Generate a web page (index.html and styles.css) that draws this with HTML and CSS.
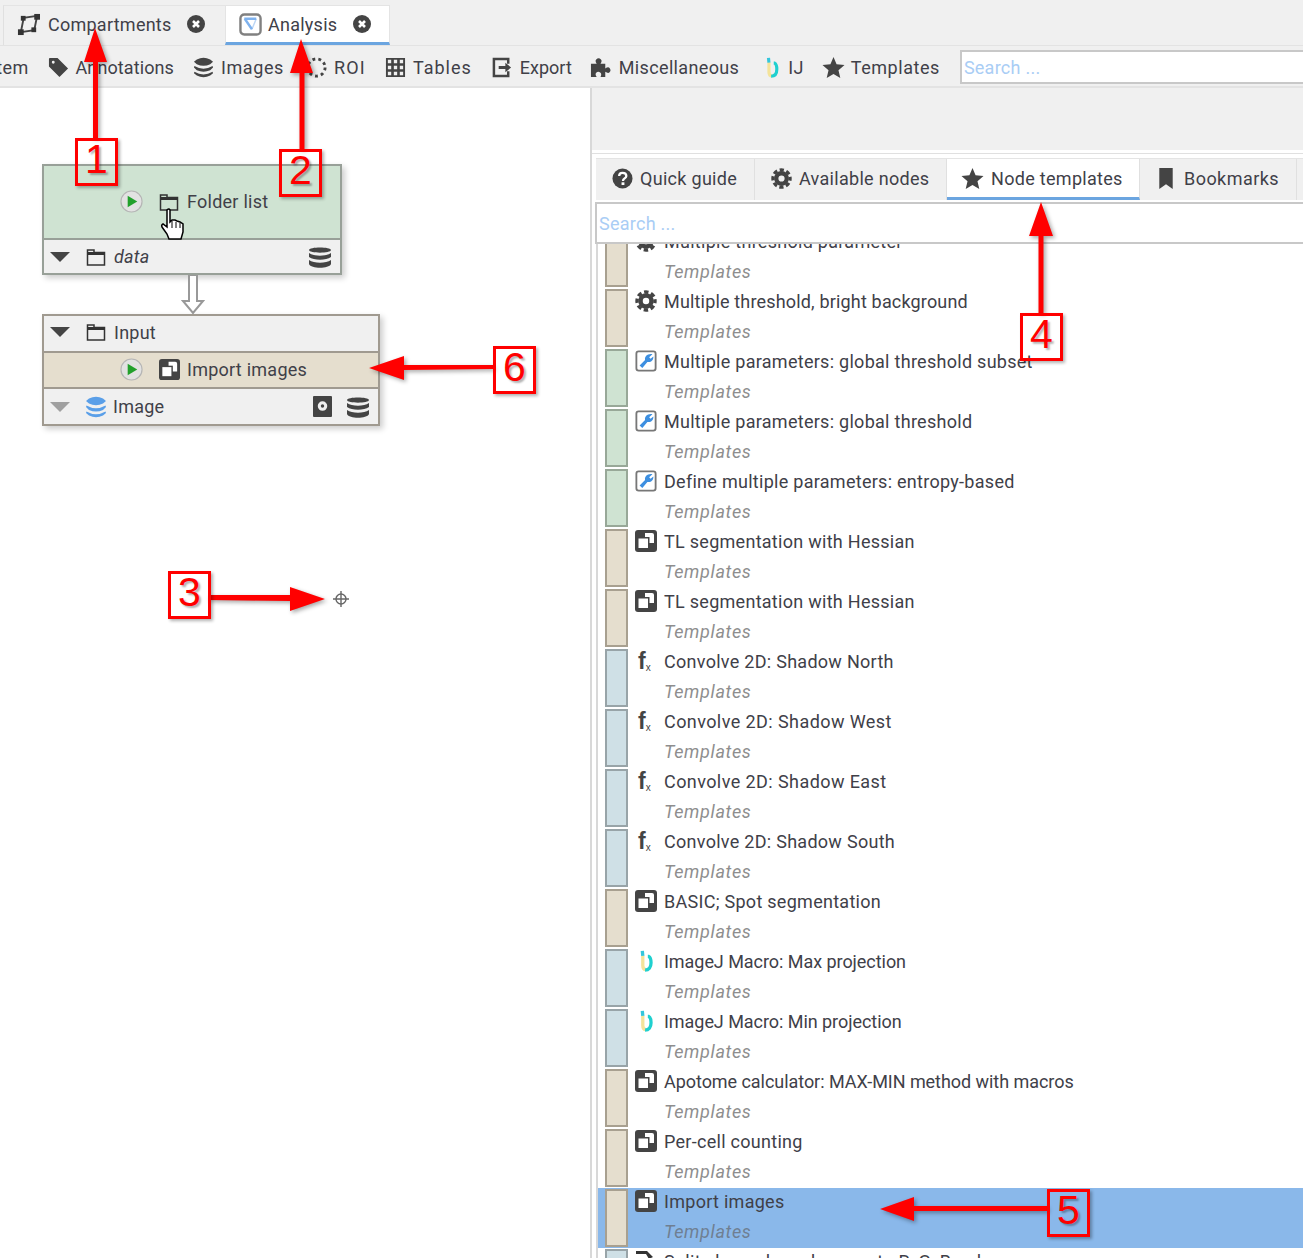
FILE: index.html
```html
<!DOCTYPE html>
<html lang="en">
<head>
    <meta charset="UTF-8">
    <meta name="viewport" content="width=device-width, initial-scale=1.0">
    <title>Analysis</title>
    <link rel="stylesheet" href="styles.css">
</head>
<body>
    <svg class="sprite" width="0" height="0">
        <symbol id="i-compartments" viewBox="0 0 24 24">
            <path d="M4 20 7 5 21 3 18 18Z" fill="none" stroke="#444" stroke-width="2"/>
            <rect x="1" y="17" width="6" height="6" fill="#333"/><rect x="4" y="3" width="5" height="5" fill="#333"/>
            <rect x="18" y="1" width="6" height="6" fill="#333"/><rect x="15" y="15" width="5" height="5" fill="#333"/>
        </symbol>
        <symbol id="i-analysis" viewBox="0 0 24 24">
            <rect x="1.500" y="1.500" width="21" height="21" rx="4" fill="#fff" stroke="#808080" stroke-width="2.500"/>
            <path d="M18 6 13.500 17" fill="none" stroke="#bcd6f5" stroke-width="1.500"/>
            <path d="M5.500 6H18M6 6 13.500 17" fill="none" stroke="#7fb2ee" stroke-width="2.500"/>
        </symbol>
        <symbol id="i-close" viewBox="0 0 18 18">
            <circle cx="9" cy="9" r="9" fill="#444"/>
            <path d="M6 6 12 12M12 6 6 12" stroke="#fff" stroke-width="2.600"/>
        </symbol>
        <symbol id="i-tag" viewBox="0 0 22 22">
            <path d="M1 2Q1 1 2 1H10L21 12 12 21 1 10ZM5.500 4A1.500 1.500 0 1 0 5.510 7 1.500 1.500 0 0 0 5.500 4Z" fill="#444" fill-rule="evenodd"/>
        </symbol>
        <symbol id="i-layers" viewBox="0 0 22 22">
            <path d="M4 2.500Q11 -1 18 2.500L21 5 18 7.500Q11 11 4 7.500L1 5ZM1.500 9.500Q11 15 20.500 9.500L21 11 18 14Q11 17 4 14L1 11ZM1.500 15.500Q11 21 20.500 15.500L21 17 18 19.500Q11 23 4 19.500L1 17Z" fill="currentColor"/>
        </symbol>
        <symbol id="i-roi" viewBox="0 0 22 22">
            <circle cx="11" cy="11" r="9" fill="none" stroke="#444" stroke-width="3" stroke-dasharray="3 3.300"/>
        </symbol>
        <symbol id="i-table" viewBox="0 0 22 22">
            <path d="M1 1H21V21H1ZM3 3h3.500v3.500H3ZM9.250 3h3.500v3.500h-3.500ZM15.500 3H19v3.500h-3.500ZM3 9.250h3.500v3.500H3ZM9.250 9.250h3.500v3.500h-3.500ZM15.500 9.250H19v3.500h-3.500ZM3 15.500h3.500V19H3ZM9.250 15.500h3.500V19h-3.500ZM15.500 15.500H19V19h-3.500Z" fill="#444" fill-rule="evenodd"/>
        </symbol>
        <symbol id="i-export" viewBox="0 0 22 22">
            <path d="M17 7V2H2V20H17V15" fill="none" stroke="#444" stroke-width="2.600"/>
            <path d="M7 9.500H14V6L20 11 14 16V12.500H7Z" fill="#444"/>
        </symbol>
        <symbol id="i-puzzle" viewBox="0 0 22 22">
            <path d="M1 7H7Q5 4 6.500 2.500 9 0 11.500 2.500 13 4 11 7H16V12Q19 10 20.500 11.500 22.500 14 20.500 16 19 17.500 16 15.500V21H11Q12.500 18 11 16.500 8.500 14.500 6.500 16.500 5 18 7 21H1Z" fill="#444"/>
        </symbol>
        <symbol id="i-ij" viewBox="0 0 16 24">
            <path d="M4.500 6V17C4.500 20 6 21.500 8 21.500" fill="none" stroke="#f4e39a" stroke-width="3.600"/>
            <path d="M4 1 4.500 6.500" fill="none" stroke="#35c6dc" stroke-width="3.600"/>
            <path d="M10 7H11C13 8 13.500 10 13.500 14 13.500 19 11 22 7 22" fill="none" stroke="#1fd0cf" stroke-width="3.600"/>
        </symbol>
        <symbol id="i-star" viewBox="0 0 24 24">
            <path d="M12 1 15.200 8.700 23.500 9.400 17.200 14.800 19.100 23 12 18.700 4.900 23 6.800 14.800 .5 9.400 8.800 8.700Z" fill="#444"/>
        </symbol>
        <symbol id="i-help" viewBox="0 0 22 22">
            <circle cx="11" cy="11" r="10.500" fill="#444"/>
            <path d="M7.500 8.500C7.500 6 9 5 11 5 13.500 5 15 6.300 15 8.300 15 11 11.500 10.800 11.500 13.500" fill="none" stroke="#fff" stroke-width="2.400"/>
            <rect x="10" y="15" width="3" height="2.800" fill="#fff"/>
        </symbol>
        <symbol id="i-cog" viewBox="0 0 22 22">
            <circle cx="11" cy="11" r="9" fill="none" stroke="#444" stroke-width="3.400" stroke-dasharray="4.400 2.670" stroke-dashoffset="2.200"/>
            <circle cx="11" cy="11" r="5.500" fill="none" stroke="#444" stroke-width="4.500"/>
        </symbol>
        <symbol id="i-bookmark" viewBox="0 0 16 24">
            <path d="M1 1H15V23L8 18 1 23Z" fill="#444"/>
        </symbol>
        <symbol id="i-folder" viewBox="0 0 20 20">
            <path d="M1.500 3H8V5.500H18.500V18H1.500Z" fill="none" stroke="#333" stroke-width="1.500"/>
            <rect x="1" y="5" width="18" height="3" fill="#333"/>
        </symbol>
        <symbol id="i-import" viewBox="0 0 22 22">
            <rect x="0" y="0" width="22" height="22" rx="3" fill="#444"/>
            <path d="M10 3H17Q19 3 19 5V13H10Z" fill="#fff"/>
            <rect x="2" y="7" width="12.500" height="12.500" fill="#444"/>
            <rect x="3.500" y="8.500" width="9.500" height="9.500" fill="#fff"/>
        </symbol>
        <symbol id="i-wrench" viewBox="0 0 24 24">
            <rect x="1.500" y="1.500" width="21" height="21" rx="2.500" fill="#fff" stroke="#777" stroke-width="2"/>
            <path d="M19 4.500 15.500 8 17 9.500 20 7C20.500 11 17 14 13.500 13L8 19.500 5 17 11 11C10 7 14 3.500 19 4.500Z" fill="#3d8fe0"/>
        </symbol>
        <symbol id="i-split" viewBox="0 0 22 22">
            <path d="M1 1H12L18 7 14 9 11 4H1Z" fill="#333"/>
        </symbol>
        <symbol id="i-play" viewBox="0 0 24 24">
            <circle cx="12" cy="12" r="11" fill="#e2e2e2" stroke="#b5b5b5" stroke-width="1.200"/>
            <path d="M8 6 18 12 8 18Z" fill="#22a02c"/>
        </symbol>
        <symbol id="i-db" viewBox="0 0 22 24">
            <path d="M0 5C0 1.500 22 1.500 22 5S0 8.500 0 5ZM0 8C5 11.500 17 11.500 22 8V12C17 15.500 5 15.500 0 12ZM0 15C5 18.500 17 18.500 22 15V19C20 24 2 24 0 19Z" fill="#444"/>
        </symbol>
        <symbol id="i-disk" viewBox="0 0 20 22">
            <path d="M1 0H19Q20 0 20 1V21Q20 22 19 22H1Q0 22 0 21V1Q0 0 1 0ZM10 5.500A5 5 0 1 0 10.010 15.500 5 5 0 0 0 10 5.500Z" fill="#444" fill-rule="evenodd"/>
            <circle cx="10" cy="10.500" r="1.800" fill="#444"/>
        </symbol>
    </svg>

    <div class="app">
        <div class="tabbar">
            <div class="doc-tab">
                <svg class="ico-24"><use href="#i-compartments"/></svg>
                <span>Compartments</span>
                <svg class="ico-close"><use href="#i-close"/></svg>
            </div>
            <div class="doc-tab doc-tab-active">
                <svg class="ico-24"><use href="#i-analysis"/></svg>
                <span>Analysis</span>
                <svg class="ico-close"><use href="#i-close"/></svg>
            </div>
        </div>

        <div class="toolbar">
            <span class="tool tool-clipped">Item</span>
            <span class="tool tool-annotations"><svg class="ico-22"><use href="#i-tag"/></svg>Annotations</span>
            <span class="tool tool-images"><svg class="ico-22"><use href="#i-layers"/></svg>Images</span>
            <span class="tool tool-roi"><svg class="ico-22"><use href="#i-roi"/></svg>ROI</span>
            <span class="tool tool-tables"><svg class="ico-22"><use href="#i-table"/></svg>Tables</span>
            <span class="tool tool-export"><svg class="ico-22"><use href="#i-export"/></svg>Export</span>
            <span class="tool tool-misc"><svg class="ico-22"><use href="#i-puzzle"/></svg>Miscellaneous</span>
            <span class="tool tool-ij"><svg class="ico-ij"><use href="#i-ij"/></svg>IJ</span>
            <span class="tool tool-templates"><svg class="ico-24"><use href="#i-star"/></svg>Templates</span>
            <input class="search search-top" type="text" placeholder="Search ...">
        </div>

        <div class="main">
            <div class="canvas">
                <div class="node node-folder">
                    <div class="node-body node-body-green">
                        <svg class="ico-24"><use href="#i-play"/></svg>
                        <svg class="ico-20"><use href="#i-folder"/></svg>
                        <span>Folder list</span>
                    </div>
                    <div class="slot">
                        <span class="tri"></span>
                        <svg class="ico-20"><use href="#i-folder"/></svg>
                        <em>data</em>
                        <svg class="ico-db"><use href="#i-db"/></svg>
                    </div>
                </div>

                <svg class="connector" width="24" height="40" viewBox="0 0 24 40">
                    <path d="M8 0V26H2L12 38 22 26H16V0Z" fill="#fff" stroke="#999" stroke-width="2"/>
                </svg>

                <div class="node node-import">
                    <div class="slot slot-input">
                        <span class="tri"></span>
                        <svg class="ico-20"><use href="#i-folder"/></svg>
                        <span>Input</span>
                    </div>
                    <div class="node-body node-body-beige">
                        <svg class="ico-24"><use href="#i-play"/></svg>
                        <svg class="ico-22"><use href="#i-import"/></svg>
                        <span>Import images</span>
                    </div>
                    <div class="slot">
                        <span class="tri tri-light"></span>
                        <svg class="ico-layers"><use href="#i-layers"/></svg>
                        <span>Image</span>
                        <svg class="ico-disk"><use href="#i-disk"/></svg>
                        <svg class="ico-db ico-db-tight"><use href="#i-db"/></svg>
                    </div>
                </div>

                <svg class="crosshair" width="16" height="16" viewBox="0 0 16 16">
                    <circle cx="8" cy="8" r="5" fill="none" stroke="#666" stroke-width="1.400"/>
                    <path d="M8 0V16M0 8H16" stroke="#666" stroke-width="1.400"/>
                </svg>

                <svg class="hand" width="26" height="34" viewBox="0 0 26 34">
                    <path d="M7 2Q9 0 10 2V14L12 12 15 12 17 13 20 14 23 16V24L21 31H9L7 26 2 19Q1 17 3 16L7 19Z" fill="#fff" stroke="#000" stroke-width="1.500"/>
                    <path d="M12 13V20M16 14V20M20 15V20" stroke="#000"/>
                </svg>
            </div>

            <div class="side">
                <div class="side-head"></div>
                <div class="side-tabs">
                    <div class="side-tab"><svg class="ico-22"><use href="#i-help"/></svg>Quick guide</div>
                    <div class="side-tab"><svg class="ico-22"><use href="#i-cog"/></svg>Available nodes</div>
                    <div class="side-tab side-tab-active"><svg class="ico-24"><use href="#i-star"/></svg>Node templates</div>
                    <div class="side-tab"><svg class="ico-bookmark"><use href="#i-bookmark"/></svg>Bookmarks</div>
                </div>
                <input class="search search-side" type="text" placeholder="Search ...">

                <div class="list">
                    <div class="row row-first row-beige"><span class="swatch"></span><div class="row-title"><svg class="row-ico"><use href="#i-cog"/></svg>Multiple threshold parameter</div><div class="row-sub">Templates</div></div>
                    <div class="row row-beige"><span class="swatch"></span><div class="row-title row-title-mid"><svg class="row-ico"><use href="#i-cog"/></svg>Multiple threshold, bright background</div><div class="row-sub">Templates</div></div>
                    <div class="row row-green"><span class="swatch"></span><div class="row-title"><svg class="row-ico"><use href="#i-wrench"/></svg>Multiple parameters: global threshold subset</div><div class="row-sub">Templates</div></div>
                    <div class="row row-green"><span class="swatch"></span><div class="row-title"><svg class="row-ico"><use href="#i-wrench"/></svg>Multiple parameters: global threshold</div><div class="row-sub">Templates</div></div>
                    <div class="row row-green"><span class="swatch"></span><div class="row-title"><svg class="row-ico"><use href="#i-wrench"/></svg>Define multiple parameters: entropy-based</div><div class="row-sub">Templates</div></div>
                    <div class="row row-beige"><span class="swatch"></span><div class="row-title"><svg class="row-ico"><use href="#i-import"/></svg>TL segmentation with Hessian</div><div class="row-sub">Templates</div></div>
                    <div class="row row-beige"><span class="swatch"></span><div class="row-title"><svg class="row-ico"><use href="#i-import"/></svg>TL segmentation with Hessian</div><div class="row-sub">Templates</div></div>
                    <div class="row row-blue"><span class="swatch"></span><div class="row-title"><span class="fx">f<small>x</small></span>Convolve 2D: Shadow North</div><div class="row-sub">Templates</div></div>
                    <div class="row row-blue"><span class="swatch"></span><div class="row-title row-title-wide"><span class="fx">f<small>x</small></span>Convolve 2D: Shadow West</div><div class="row-sub">Templates</div></div>
                    <div class="row row-blue"><span class="swatch"></span><div class="row-title row-title-wide"><span class="fx">f<small>x</small></span>Convolve 2D: Shadow East</div><div class="row-sub">Templates</div></div>
                    <div class="row row-blue"><span class="swatch"></span><div class="row-title"><span class="fx">f<small>x</small></span>Convolve 2D: Shadow South</div><div class="row-sub">Templates</div></div>
                    <div class="row row-beige"><span class="swatch"></span><div class="row-title"><svg class="row-ico"><use href="#i-import"/></svg>BASIC; Spot segmentation</div><div class="row-sub">Templates</div></div>
                    <div class="row row-blue"><span class="swatch"></span><div class="row-title row-title-tight"><svg class="row-ico"><use href="#i-ij"/></svg>ImageJ Macro: Max projection</div><div class="row-sub">Templates</div></div>
                    <div class="row row-blue"><span class="swatch"></span><div class="row-title row-title-tight"><svg class="row-ico"><use href="#i-ij"/></svg>ImageJ Macro: Min projection</div><div class="row-sub">Templates</div></div>
                    <div class="row row-beige"><span class="swatch"></span><div class="row-title row-title-tight"><svg class="row-ico"><use href="#i-import"/></svg>Apotome calculator: MAX-MIN method with macros</div><div class="row-sub">Templates</div></div>
                    <div class="row row-beige"><span class="swatch"></span><div class="row-title"><svg class="row-ico"><use href="#i-import"/></svg>Per-cell counting</div><div class="row-sub">Templates</div></div>
                    <div class="row row-beige row-selected"><span class="swatch"></span><div class="row-title"><svg class="row-ico"><use href="#i-import"/></svg>Import images</div><div class="row-sub">Templates</div></div>
                    <div class="row row-blue"><span class="swatch"></span><div class="row-title"><svg class="row-ico"><use href="#i-split"/></svg>Split channels and merge to R, G, B only</div><div class="row-sub">Templates</div></div>
                </div>
            </div>
        </div>
    </div>

    <!-- red annotations drawn on top of the screenshot -->
    <svg class="arrows" width="1303" height="1258" viewBox="0 0 1303 1258">
        <path d="M93 138V62H84L95 28 107 62H98V138Z"/>
        <path d="M299.500 149V73H290L301 39 313 73H304.500V149Z"/>
        <path d="M208 595H290V587L325 599 290 611V601L208 600Z"/>
        <path d="M1038.500 313V236H1029L1041 202 1053 236H1043.500V313Z"/>
        <path d="M1047 1206H914V1197L880 1209 914 1221V1211H1047Z"/>
        <path d="M493 365H404V356L369 368 404 380V370L493 369Z"/>
    </svg>
    <div class="mark mark-1">1</div>
    <div class="mark mark-2">2</div>
    <div class="mark mark-3">3</div>
    <div class="mark mark-4">4</div>
    <div class="mark mark-5">5</div>
    <div class="mark mark-6">6</div>
</body>
</html>
```

FILE: styles.css
```css
html, body {
    margin: 0;
    padding: 0;
    height: 100%;
    overflow: hidden;
}
body {
    font-family: Roboto, "Liberation Sans", sans-serif;
    font-size: 18px;
    letter-spacing: 0.25px;
    color: #404048;
    background-color: #fff;
    position: relative;
}
.sprite {
    position: absolute;
}
svg {
    flex: none;
    color: #444;
}
.ico-20 { width: 20px; height: 20px; }
.ico-22 { width: 21px; height: 21px; }
.ico-24 { width: 23px; height: 23px; }
.ico-close { width: 18px; height: 18px; }
.ico-ij { width: 14px; height: 23px; }
.ico-bookmark { width: 16px; height: 23px; margin-left: 2px; margin-right: 3px; }
.ico-layers { width: 24px; height: 22px; color: #5a9fe8; margin-right: -3px; }
.ico-db { width: 22px; height: 24px; margin-left: auto; }
.ico-db-tight { margin-left: 7px; }
.ico-disk { width: 19px; height: 21px; margin-left: auto; }

.app {
    display: flex;
    flex-direction: column;
    height: 1258px;
}

/* document tabs */
.tabbar {
    height: 40px;
    padding: 5px 0 0 3px;
    display: flex;
    background-color: #f0f0f0;
    border-bottom: 1px solid #e3e3e3;
}
.doc-tab {
    width: 222px;
    height: 40px;
    padding: 0 20px 3px 13px;
    box-sizing: border-box;
    display: flex;
    align-items: center;
    gap: 8px;
    border-left: 1px solid #e0e0e0;
    border-top: 1px solid #e4e4e4;
}
.doc-tab .ico-close {
    margin-left: auto;
}
.doc-tab-active {
    width: 165px;
    padding: 0 18px 0 13px;
    gap: 6px;
    background-color: #fff;
    border: 1px solid #e4e4e4;
    border-bottom: 3px solid #6ba5e0;
}

/* toolbar */
.toolbar {
    height: 38px;
    padding-top: 2px;
    display: flex;
    align-items: center;
    gap: 20px;
    letter-spacing: 0.35px;
    background-color: #f0f0f0;
    border-bottom: 2px solid #e3e3e3;
    overflow: hidden;
}
.tool {
    display: flex;
    align-items: center;
    gap: 7px;
    white-space: nowrap;
}
.tool-clipped { margin-left: -9px; margin-right: -1px; }
.tool-annotations { letter-spacing: 0.1px; }
.tool-images { margin-left: -1px; letter-spacing: 0.6px; }
.tool-roi { margin-left: 2px; letter-spacing: 1.2px; }
.tool-tables { margin-left: -1px; letter-spacing: 1px; }
.tool-export { letter-spacing: 0; }
.tool-misc { margin-left: -2px; gap: 8px; }
.tool-ij { margin-left: 6px; gap: 9px; }
.tool-templates { margin-left: -2px; gap: 6px; letter-spacing: 0.55px; }
.search {
    font-family: Roboto, "Liberation Sans", sans-serif;
    font-size: 18px;
    letter-spacing: 0.25px;
    box-sizing: border-box;
    background-color: #fff;
    border: 2px solid #c8c8c8;
    padding: 0 2px;
    outline: none;
}
.search::placeholder {
    color: #a9cdf5;
    opacity: 1;
}
.search-top {
    flex: none;
    width: 360px;
    height: 34px;
}

/* main area */
.main {
    flex: 1;
    display: flex;
    min-height: 0;
}
.canvas {
    width: 590px;
    position: relative;
    flex: none;
}
.node {
    position: absolute;
    left: 42px;
    box-sizing: border-box;
    background-color: #f0f0f0;
    border: 2px solid #98a098;
    box-shadow: 3px 3px 6px rgba(0, 0, 0, 0.2);
}
.node-folder {
    top: 76px;
    width: 300px;
}
.node-import {
    top: 226px;
    width: 338px;
    border-color: #a09a90;
}
.node-body {
    display: flex;
    align-items: center;
    padding-left: 76px;
    gap: 16px;
    box-sizing: border-box;
}
.node-body-green {
    height: 72px;
    background-color: #cfe3d2;
    padding-bottom: 1px;
}
.node-body-beige {
    height: 38px;
    background-color: #e5dece;
    border-top: 2px solid #a09a90;
    border-bottom: 2px solid #a09a90;
    padding-bottom: 1px;
}
.node-body .ico-20 {
    margin-right: -8px;
}
.node-body .ico-22 {
    margin-right: -9px;
}
.slot {
    height: 35px;
    display: flex;
    align-items: center;
    padding: 0 9px 0 6px;
    box-sizing: border-box;
    gap: 8px;
}
.slot-input {
    padding-bottom: 3px;
}
.node-folder .slot {
    border-top: 2px solid #98a098;
}
.slot em {
    font-style: italic;
}
.tri {
    width: 0;
    height: 0;
    margin-right: 8px;
    border-left: 10px solid transparent;
    border-right: 10px solid transparent;
    border-top: 10px solid #444;
}
.tri-light {
    border-top-color: #a0a0a0;
    margin-right: 6px;
}
.connector {
    position: absolute;
    left: 181px;
    top: 187px;
}
.crosshair {
    position: absolute;
    left: 333px;
    top: 503px;
}
.hand {
    position: absolute;
    left: 160px;
    top: 120px;
}

/* right panel */
.side {
    flex: 1;
    min-width: 0;
    display: flex;
    flex-direction: column;
    border-left: 2px solid #d8d8d8;
    padding-left: 3px;
    overflow: hidden;
}
.side-head {
    height: 62px;
    margin-left: -3px;
    background-color: #f0f0f0;
    border-bottom: 3px solid #fff;
    box-shadow: 0 1px 0 #e0e0e0;
    flex: none;
}
.side-tabs {
    height: 42px;
    margin-top: 5px;
    margin-left: 1px;
    display: flex;
    letter-spacing: 0.3px;
    background-color: #f0f0f0;
    border-top: 1px solid #e4e4e4;
    box-sizing: border-box;
    flex: none;
}
.side-tab {
    display: flex;
    align-items: center;
    gap: 7px;
    padding: 0 18px 2px 16px;
    box-sizing: border-box;
    border-right: 1px solid #e0e0e0;
    white-space: nowrap;
}
.side-tab:nth-child(1) { width: 159px; }
.side-tab:nth-child(2) { width: 192px; }
.side-tab:nth-child(3) { width: 193px; padding-left: 14px; }
.side-tab:nth-child(4) { width: 157px; letter-spacing: 0.45px; }
.side-tab-active {
    padding-bottom: 0;
    background-color: #fff;
    border-bottom: 3px solid #6ba5e0;
}
.search-side {
    width: calc(100% + 10px);
    height: 42px;
    margin-top: 2px;
    flex: none;
}
.list {
    flex: 1;
    min-height: 0;
    overflow: hidden;
    margin-left: 1px;
    border-left: 2px solid #d8d8d8;
}
.row {
    height: 60px;
    position: relative;
    padding-left: 66px;
    box-sizing: border-box;
}
.row-first {
    margin-top: -16px;
}
.swatch {
    position: absolute;
    left: 7px;
    top: 1px;
    width: 23px;
    height: 58px;
    box-sizing: border-box;
    border: 2px solid #9a9a90;
}
.row-beige .swatch { background-color: #e5dece; border-color: #a8a090; }
.row-green .swatch { background-color: #cfe3d2; border-color: #98a898; }
.row-blue .swatch { background-color: #cfe0e6; border-color: #98a4a8; }
.row-selected {
    background-color: #8ab8ea;
}
.row-title {
    height: 30px;
    padding-bottom: 4px;
    box-sizing: border-box;
    display: flex;
    align-items: center;
    white-space: nowrap;
    position: relative;
    letter-spacing: 0.28px;
}
.row-title-tight {
    letter-spacing: -0.05px;
}
.row-title-mid {
    letter-spacing: 0.17px;
}
.row-title-wide {
    letter-spacing: 0.42px;
}
.row-sub {
    height: 30px;
    line-height: 27px;
    font-style: italic;
    letter-spacing: 0.65px;
    color: #8e8e8e;
}
.row-selected .row-sub {
    color: #6f7f92;
}
.row-ico {
    position: absolute;
    left: -29px;
    top: 2px;
    width: 22px;
    height: 22px;
}
.fx {
    position: absolute;
    left: -26px;
    top: 1px;
    font-family: "Liberation Sans", sans-serif;
    font-weight: bold;
    font-size: 23px;
    line-height: 24px;
    letter-spacing: 0;
    color: #444;
}
.fx small {
    font-weight: normal;
    font-size: 10px;
    vertical-align: -2px;
}

/* annotations */
.arrows {
    position: absolute;
    left: 0;
    top: 0;
    fill: #f00;
    filter: drop-shadow(2px 2px 2px rgba(0, 0, 0, 0.35));
    pointer-events: none;
}
.mark {
    position: absolute;
    width: 43px;
    height: 48px;
    box-sizing: border-box;
    border: 3px solid #f00;
    color: #f00;
    font-family: "Liberation Sans", sans-serif;
    font-size: 41px;
    line-height: 36px;
    letter-spacing: 0;
    text-align: center;
    box-shadow: 2px 2px 3px rgba(0, 0, 0, 0.3);
    text-shadow: 2px 2px 2px rgba(0, 0, 0, 0.3);
}
.mark-1 { left: 75px; top: 138px; }
.mark-2 { left: 279px; top: 149px; }
.mark-3 { left: 168px; top: 571px; }
.mark-4 { left: 1020px; top: 313px; }
.mark-5 { left: 1047px; top: 1189px; }
.mark-6 { left: 493px; top: 346px; }
```
